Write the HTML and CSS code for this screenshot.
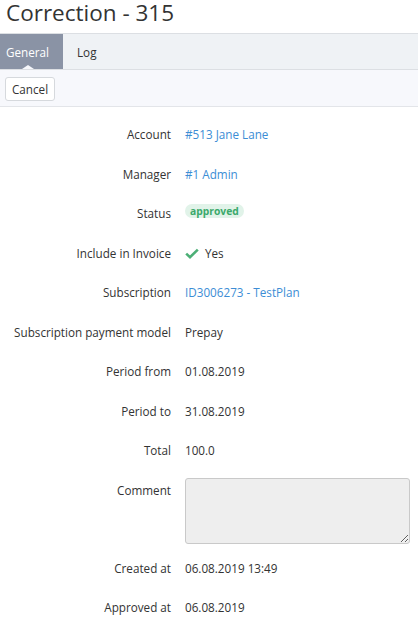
FILE: index.html
```html
<!DOCTYPE html>
<html>
<head>
  <meta charset="UTF-8">
  <meta name="viewport" content="width=device-width, initial-scale=1.0">
  <title>Correction - 315</title>
  <link rel="stylesheet" href="styles.css">
</head>
<body>
  <h1 class="page-title">Correction - 315</h1>

  <div class="tabs">
    <div class="tab active"><span class="tab-label">General</span></div>
    <div class="tab"><span class="tab-label">Log</span></div>
  </div>

  <div class="toolbar">
    <button class="btn">Cancel</button>
  </div>

  <div class="details">
    <div class="label">Account</div>
    <div class="value"><a href="#">#513 Jane Lane</a></div>

    <div class="label">Manager</div>
    <div class="value"><a href="#">#1 Admin</a></div>

    <div class="label">Status</div>
    <div class="value"><span class="badge">approved</span></div>

    <div class="label">Include in Invoice</div>
    <div class="value">
      <svg class="check" width="14" height="11" viewBox="0 0 14 11">
        <path d="M1.2 5.6 L5 9.2 L12.8 1.6" fill="none" stroke="#4caf76" stroke-width="2.6"/>
      </svg>
      Yes
    </div>

    <div class="label">Subscription</div>
    <div class="value"><a href="#">ID3006273 - TestPlan</a></div>

    <div class="label">Subscription payment model</div>
    <div class="value">Prepay</div>

    <div class="label">Period from</div>
    <div class="value">01.08.2019</div>

    <div class="label">Period to</div>
    <div class="value">31.08.2019</div>

    <div class="label">Total</div>
    <div class="value">100.0</div>

    <div class="label">Comment</div>
    <div class="value"><textarea class="comment" disabled></textarea></div>

    <div class="label">Created at</div>
    <div class="value">06.08.2019 13:49</div>

    <div class="label">Approved at</div>
    <div class="value">06.08.2019</div>
  </div>
</body>
</html>
```

FILE: styles.css
```css
body {
  margin: 0;
  font-family: 'Open Sans', 'Liberation Sans', sans-serif;
  font-size: 11.7px;
  color: #333;
  background: #fff;
}
.page-title {
  margin: 0 0 7px;
  padding: 0 6px;
  font-size: 22.5px;
  font-weight: 400;
  line-height: 26px;
  color: #333;
}
.tabs {
  display: flex;
  height: 35px;
  background: #eff2f5;
  border-top: 1px solid #dcdfe3;
  border-bottom: 1px solid #dcdfe3;
}
.tab {
  display: flex;
  align-items: center;
  padding: 0 14px;
  color: #333;
}
.tab:first-child {
  padding-left: 6px;
}
.tab.active {
  background: #8a93a5;
  color: #fff;
}
.tab-label {
  position: relative;
  height: 100%;
  display: flex;
  align-items: center;
}
.tab.active .tab-label::after {
  content: "";
  position: absolute;
  left: 50%;
  bottom: 0;
  margin-left: -6px;
  border: 6px solid transparent;
  border-top: 0;
  border-bottom: 4px solid #f7f8fc;
}
.toolbar {
  padding: 7px 5px 5px;
  background: #f7f8fc;
  border-bottom: 1px solid #e3e5e9;
}
.btn {
  height: 24px;
  padding: 0 6px;
  font-family: inherit;
  font-size: 11.7px;
  color: #333;
  background: #fff;
  border: 1px solid #d6d9dd;
  border-radius: 3px;
}
.details {
  display: grid;
  grid-template-columns: 171px 1fr;
  column-gap: 14px;
  padding-top: 8px;
}
.label, .value {
  padding: 10px 0;
  line-height: 19.5px;
}
.label {
  text-align: right;
}
.value {
  display: flex;
  align-items: center;
  align-self: start;
}
.value a {
  color: #3c8dd5;
  text-decoration: none;
}
.badge {
  display: inline-block;
  padding: 0 5px;
  font-size: 10.3px;
  font-weight: 700;
  line-height: 14px;
  color: #3ba96b;
  background: #e1f3e9;
  border-radius: 8px;
}
.check {
  margin-right: 6px;
}
.comment {
  display: block;
  width: 225px;
  height: 66px;
  margin: -3px 0 -5px;
  box-sizing: border-box;
  background: #eeeeee;
  border: 1px solid #c9c9c9;
  border-radius: 3px;
}
```
